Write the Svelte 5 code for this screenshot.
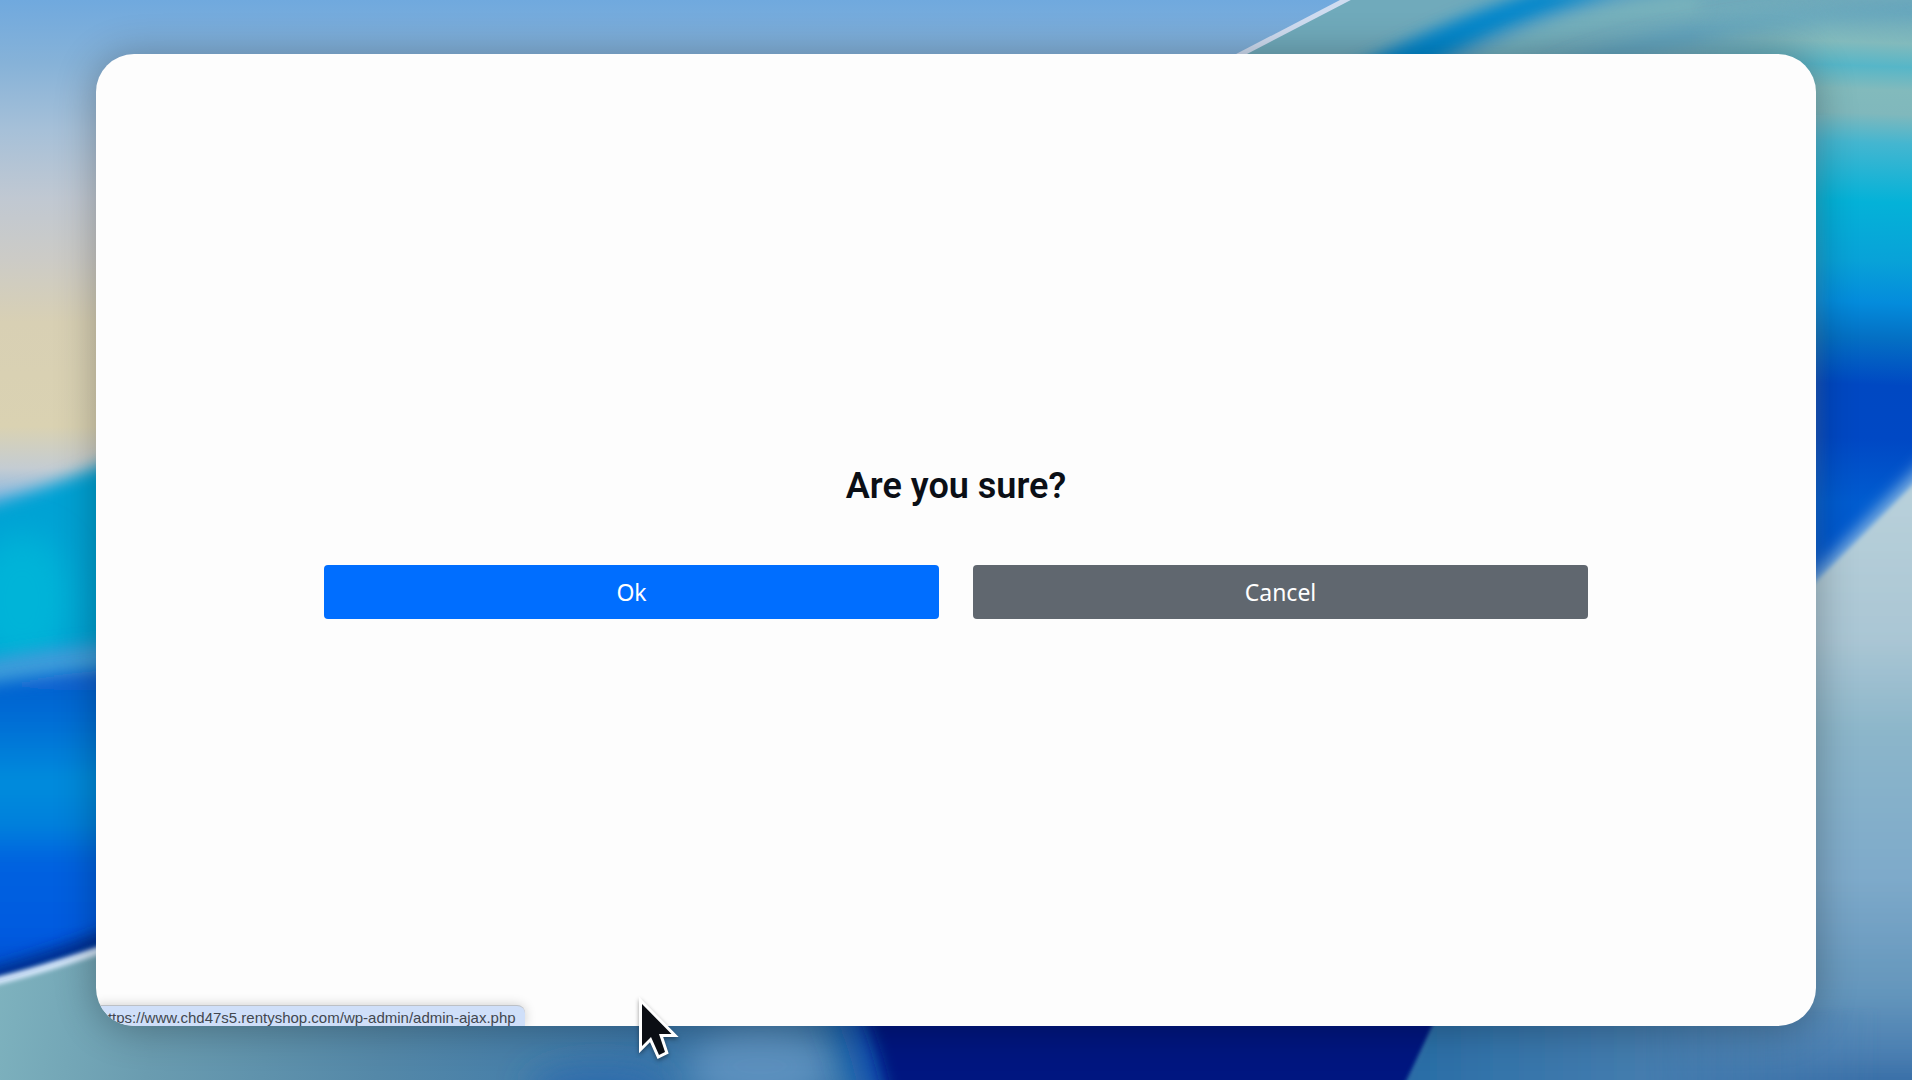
<script>
  let answer = $state('');
</script>

<div class="desktop">
  <svg class="wallpaper" viewBox="0 0 1912 1080" preserveAspectRatio="none" aria-hidden="true">
    <defs>
      <filter id="soft2" x="-20%" y="-20%" width="140%" height="140%"><feGaussianBlur stdDeviation="2" /></filter>
      <filter id="soft8" x="-20%" y="-20%" width="140%" height="140%"><feGaussianBlur stdDeviation="8" /></filter>
      <filter id="soft16" x="-50%" y="-50%" width="200%" height="200%"><feGaussianBlur stdDeviation="16" /></filter>
      <linearGradient id="sky" gradientUnits="userSpaceOnUse" x1="0" y1="0" x2="0" y2="520">
        <stop offset="0" stop-color="#70a9de" />
        <stop offset="0.12" stop-color="#86b2d8" />
        <stop offset="0.25" stop-color="#a6c0d8" />
        <stop offset="0.38" stop-color="#c0c8d2" />
        <stop offset="0.5" stop-color="#cccbc6" />
        <stop offset="0.62" stop-color="#d8d0b4" />
        <stop offset="0.82" stop-color="#dad2b2" />
        <stop offset="0.9" stop-color="#c4ccd2" />
        <stop offset="0.96" stop-color="#8ab8e0" />
      </linearGradient>
      <linearGradient id="blueLeft" gradientUnits="userSpaceOnUse" x1="0" y1="670" x2="0" y2="980">
        <stop offset="0" stop-color="#0a5cce" />
        <stop offset="0.18" stop-color="#0070d6" />
        <stop offset="0.36" stop-color="#008cdc" />
        <stop offset="0.5" stop-color="#0080dc" />
        <stop offset="0.62" stop-color="#0062e0" />
        <stop offset="0.85" stop-color="#005ae0" />
        <stop offset="1" stop-color="#0050cc" />
      </linearGradient>
      <linearGradient id="tealLeft" gradientUnits="userSpaceOnUse" x1="0" y1="970" x2="640" y2="1080">
        <stop offset="0" stop-color="#7eb2be" />
        <stop offset="0.25" stop-color="#6a9cb0" />
        <stop offset="0.6" stop-color="#5488a8" />
        <stop offset="1" stop-color="#3c78aa" />
      </linearGradient>
      <linearGradient id="rightBands" gradientUnits="userSpaceOnUse" x1="1840" y1="0" x2="1820" y2="590">
        <stop offset="0" stop-color="#74b0bc" stop-opacity="0" />
        <stop offset="0.07" stop-color="#82babc" />
        <stop offset="0.11" stop-color="#56b6c8" />
        <stop offset="0.15" stop-color="#82babc" />
        <stop offset="0.19" stop-color="#80b8bc" />
        <stop offset="0.24" stop-color="#44b6d0" />
        <stop offset="0.34" stop-color="#04b2d8" />
        <stop offset="0.44" stop-color="#08a2d8" />
        <stop offset="0.51" stop-color="#048cdc" />
        <stop offset="0.57" stop-color="#0470c4" />
        <stop offset="0.65" stop-color="#0048c2" />
        <stop offset="0.74" stop-color="#0048c4" />
        <stop offset="0.85" stop-color="#005cd0" />
        <stop offset="1" stop-color="#0054d0" />
      </linearGradient>
      <linearGradient id="glassRight" gradientUnits="userSpaceOnUse" x1="0" y1="500" x2="0" y2="1080">
        <stop offset="0" stop-color="#b8d0da" />
        <stop offset="0.24" stop-color="#aac6d4" />
        <stop offset="0.4" stop-color="#8cb6ca" />
        <stop offset="0.65" stop-color="#7eaaca" />
        <stop offset="0.85" stop-color="#6496bc" />
        <stop offset="0.95" stop-color="#4c80b2" />
        <stop offset="1" stop-color="#3a70a8" />
      </linearGradient>
      <linearGradient id="floor" gradientUnits="userSpaceOnUse" x1="1400" y1="0" x2="1880" y2="0">
        <stop offset="0" stop-color="#286ca6" />
        <stop offset="0.2" stop-color="#3474aa" />
        <stop offset="0.5" stop-color="#447cae" />
        <stop offset="1" stop-color="#487eb0" stop-opacity="0" />
      </linearGradient>
      <linearGradient id="bandFade" gradientUnits="userSpaceOnUse" x1="1690" y1="0" x2="1830" y2="0">
        <stop offset="0" stop-color="#000" />
        <stop offset="1" stop-color="#fff" />
      </linearGradient>
      <mask id="bandMask" maskUnits="userSpaceOnUse" x="1690" y="0" width="222" height="610">
        <rect x="1690" width="222" height="610" fill="url(#bandFade)" />
      </mask>
    </defs>

    <rect width="1912" height="1080" fill="url(#sky)" />

    <path d="M-40 512Q50 490 130 452V700H-40Z" fill="#06a2d4" filter="url(#soft8)" />
    <ellipse cx="22" cy="600" rx="50" ry="66" fill="#04b4d8" filter="url(#soft16)" />
    <path d="M-40 666Q40 646 130 642V730H-40Z" fill="#3c9cda" filter="url(#soft8)" />
    <path d="M-40 688Q50 674 130 668V1010H-40Z" fill="url(#blueLeft)" filter="url(#soft8)" />
    <path d="M-40 986Q50 964 150 922" fill="none" stroke="#00287e" stroke-width="16" filter="url(#soft8)" />

    <path d="M-20 986Q50 970 140 935H1000V1120H-20Z" fill="url(#tealLeft)" />
    <path d="M-20 985Q50 969 140 936" fill="none" stroke="#cfe2f6" stroke-width="8" filter="url(#soft2)" />

    <ellipse cx="600" cy="1090" rx="70" ry="24" fill="#2e6cac" filter="url(#soft16)" />
    <ellipse cx="760" cy="1066" rx="70" ry="40" fill="#5c90be" filter="url(#soft16)" />
    <path d="M826 1000Q850 1040 862 1110H1300V1000Z" fill="#0850ac" filter="url(#soft16)" />
    <path d="M856 1000Q880 1050 890 1110H1500V1000Z" fill="#001680" filter="url(#soft8)" />

    <path d="M1350 0L1120 115H1912V0Z" fill="#70aabb" />
    <path d="M1600 -20Q1440 20 1300 100H1430Q1560 0 1760 -20Z" fill="#5aa0c2" filter="url(#soft8)" />
    <path d="M1540 -10Q1440 22 1330 80H1410Q1480 26 1620 -10Z" fill="#0486cc" filter="url(#soft8)" />
    <path d="M1450 80Q1560 10 1700 4" fill="none" stroke="#7cb6bc" stroke-width="12" filter="url(#soft8)" />
    <path d="M1500 100Q1640 20 1930 14" fill="none" stroke="#5ea2be" stroke-width="16" filter="url(#soft8)" />
    <path d="M1355 -5L1230 60" stroke="#cfdcf0" stroke-width="5" />

    <path d="M1690 0H1912V610H1690Z" fill="url(#rightBands)" mask="url(#bandMask)" />
    <path d="M1932 454L1790 598V900H1932Z" fill="#84b4e0" filter="url(#soft8)" />
    <path d="M1940 458L1780 618V1000H1448L1396 1110H1940Z" fill="url(#glassRight)" filter="url(#soft2)" />
    <path d="M1440 1010L1402 1090H1912V1010Z" fill="url(#floor)" filter="url(#soft2)" />
  </svg>

  <main class="window">
    <section class="confirm" aria-labelledby="question">
      <h1 id="question">Are you sure?</h1>
      <div class="actions">
        <button class="ok" type="button" onclick={() => (answer = 'ok')}>Ok</button>
        <button class="cancel" type="button" onclick={() => (answer = 'cancel')}>Cancel</button>
      </div>
    </section>
    <div class="status">https://www.chd47s5.rentyshop.com/wp-admin/admin-ajax.php</div>
  </main>

  <svg class="cursor" viewBox="0 0 42 64" aria-hidden="true">
    <path d="M5 6V48L14 39L22 57L28 54L22 36H34.500Z" fill="#0b0e14" stroke="#fff" stroke-width="6" paint-order="stroke" />
  </svg>
</div>

<style>
  :global(body) {
    margin: 0;
  }

  .desktop {
    position: relative;
    display: flex;
    box-sizing: border-box;
    min-height: 100vh;
    padding: 54px 5%;
    overflow: hidden;
    background: #5a8fb4;
  }

  .wallpaper {
    position: absolute;
    inset: 0;
    width: 100%;
    height: 100%;
  }

  .window {
    position: relative;
    display: grid;
    flex: 1;
    grid-template-rows: 1fr auto 1fr;
    border-radius: 38px;
    background: #fdfdfd;
    box-shadow: 0 2px 40px rgba(0, 0, 0, 0.3);
    overflow: hidden;
  }

  .confirm {
    grid-row: 2;
    box-sizing: border-box;
    width: 100%;
    max-width: 1264px;
    margin: 0 auto;
  }

  h1 {
    margin: 0 0 54px;
    color: #0b0f16;
    font: 600 36px/50px Roboto, sans-serif;
    text-align: center;
  }

  .actions {
    display: grid;
    grid-template-columns: 1fr 1fr;
    gap: 34px;
  }

  button {
    height: 54px;
    padding: 0;
    border: 0;
    border-radius: 4px;
    color: #fff;
    font: 400 23px/32px "Noto Sans", sans-serif;
    cursor: pointer;
  }

  .ok {
    background: #006eff;
  }

  .cancel {
    background: #60676f;
  }

  .status {
    grid-row: 3;
    align-self: end;
    justify-self: start;
    height: 20px;
    padding: 0 9px 0 4px;
    border-top: 1px solid #bcc0c6;
    border-radius: 0 8px 0 0;
    background: #cfdff9;
    color: #42474f;
    box-shadow: 0 0 12px rgba(0, 0, 0, 0.2);
    font: 400 15px/24px "Liberation Sans", Arial, sans-serif;
    white-space: nowrap;
  }

  .cursor {
    position: absolute;
    left: 637px;
    top: 998px;
    width: 42px;
    height: 64px;
    overflow: visible;
    filter: drop-shadow(0 2px 2px rgba(0, 0, 0, 0.4));
  }
</style>
